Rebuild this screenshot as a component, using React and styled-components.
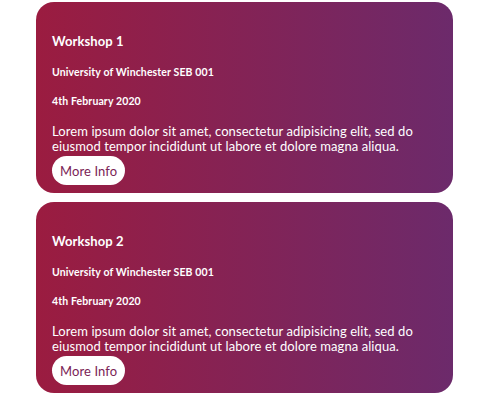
import React from "react";
import styled, { createGlobalStyle } from "styled-components";

const Global = createGlobalStyle`
  html, body { margin: 0; padding: 0; background: #fff; }
  body { font-family: "Lato", "Noto Sans", sans-serif; }
`;

const List = styled.div`
  display: flex;
  flex-direction: column;
  gap: 9px;
  padding: 2px 47px 0 36px;
`;

const Card = styled.div`
  border-radius: 18px;
  background: linear-gradient(90deg, #9b1c40 0%, #6c2a6b 100%);
  color: #fff;
  padding: 31px 16px 7px 16px;
  height: 191px;
  box-sizing: border-box;
`;

const Title = styled.h3`
  margin: 0 0 17px;
  font-size: 13px;
  font-weight: 700;
  line-height: 16px;
  letter-spacing: 0.1px;
`;

const Meta = styled.p`
  margin: 0 0 16px;
  font-size: 10.5px;
  font-weight: 700;
  line-height: 13px;
  letter-spacing: 0.12px;
`;

const Body = styled.p`
  margin: 0 0 2px;
  font-size: 13px;
  line-height: 15px;
  letter-spacing: 0.08px;
`;

const Button = styled.button`
  display: block;
  font-family: inherit;
  border: none;
  background: #fff;
  color: #7b2456;
  border-radius: 15px;
  height: 29px;
  padding: 0 8px;
  font-size: 13px;
  letter-spacing: 0.1px;
`;

const items = [1, 2];

export default function App() {
  return (
    <>
      <Global />
      <List>
        {items.map((n) => (
          <Card key={n}>
            <Title>Workshop {n}</Title>
            <Meta>University of Winchester SEB 001</Meta>
            <Meta>4th February 2020</Meta>
            <Body>
              Lorem ipsum dolor sit amet, consectetur adipisicing elit, sed do
              eiusmod tempor incididunt ut labore et dolore magna aliqua.
            </Body>
            <Button>More Info</Button>
          </Card>
        ))}
      </List>
    </>
  );
}
